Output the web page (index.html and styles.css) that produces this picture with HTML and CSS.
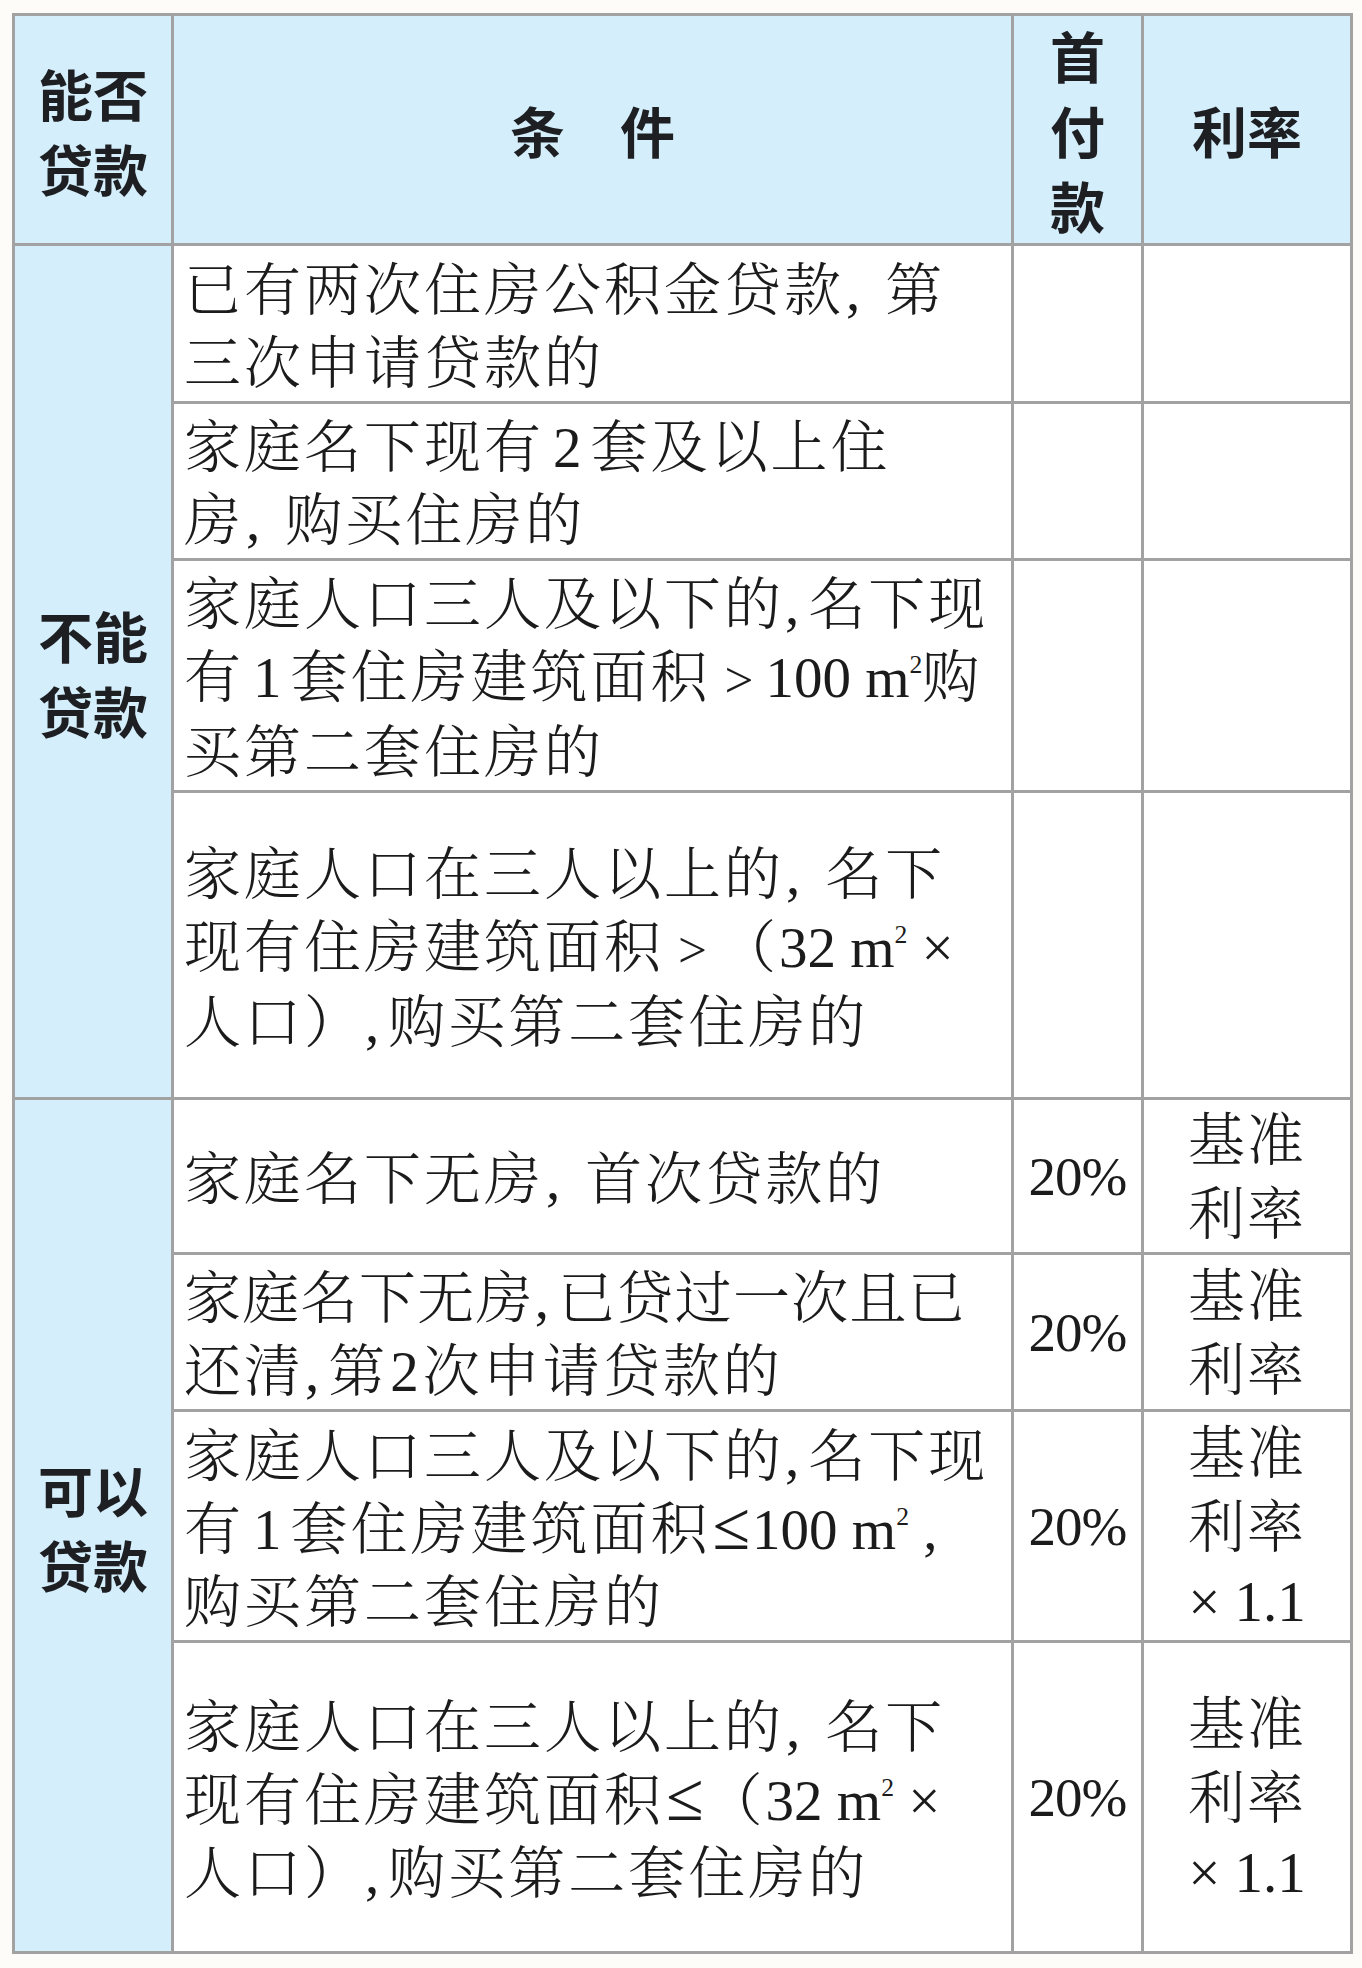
FILE: index.html
```html
<!DOCTYPE html>
<html lang="zh-CN">
<head>
<meta charset="utf-8">
<title>住房公积金贷款条件</title>
<link rel="stylesheet" href="styles.css">
</head>
<body>
<table class="loan">
  <colgroup>
    <col class="c-label">
    <col class="c-cond">
    <col class="c-pay">
    <col class="c-rate">
  </colgroup>
  <thead>
    <tr class="r-head">
      <th class="head">能否<br>贷款</th>
      <th class="head">条　件</th>
      <th class="head">首<br>付<br>款</th>
      <th class="head">利率</th>
    </tr>
  </thead>
  <tbody>
    <tr class="r1">
      <th class="group" rowspan="4">不能<br>贷款</th>
      <td class="cond">已有两次住房公积金贷款<span class="lat cm">,</span>第<br>三次申请贷款的</td>
      <td class="val"></td>
      <td class="rate"></td>
    </tr>
    <tr class="r2">
      <td class="cond">家庭名下现有<span class="lat num">2</span>套及以上住<br>房<span class="lat cm">,</span>购买住房的</td>
      <td class="val"></td>
      <td class="rate"></td>
    </tr>
    <tr class="r3">
      <td class="cond">家庭人口三人及以下的<span class="lat cn">,</span>名下现<br>有<span class="lat num">1</span>套住房建筑面积<span class="lat op">&gt;</span><span class="lat">100 m<sup>2</sup></span>购<br>买第二套住房的</td>
      <td class="val"></td>
      <td class="rate"></td>
    </tr>
    <tr class="r4">
      <td class="cond">家庭人口在三人以上的<span class="lat cm">,</span>名下<br>现有住房建筑面积<span class="lat op">&gt;</span>（<span class="lat">32 m<sup>2</sup> ×</span><br>人口）<span class="lat cn">,</span>购买第二套住房的</td>
      <td class="val"></td>
      <td class="rate"></td>
    </tr>
    <tr class="r5">
      <th class="group" rowspan="4">可以<br>贷款</th>
      <td class="cond">家庭名下无房<span class="lat cm">,</span>首次贷款的</td>
      <td class="val">20%</td>
      <td class="rate">基准<br>利率</td>
    </tr>
    <tr class="r6">
      <td class="cond"><span class="tight">家庭名下无房<span class="lat cn">,</span>已贷过一次且已</span><br>还清<span class="lat cn">,</span>第<span class="lat num-t">2</span>次申请贷款的</td>
      <td class="val">20%</td>
      <td class="rate">基准<br>利率</td>
    </tr>
    <tr class="r7">
      <td class="cond">家庭人口三人及以下的<span class="lat cn">,</span>名下现<br>有<span class="lat num">1</span>套住房建筑面积<span class="lat le">≤</span><span class="lat">100 m<sup>2</sup> ,</span><br>购买第二套住房的</td>
      <td class="val">20%</td>
      <td class="rate">基准<br>利率<br><span class="lat">× 1.1</span></td>
    </tr>
    <tr class="r8">
      <td class="cond">家庭人口在三人以上的<span class="lat cm">,</span>名下<br>现有住房建筑面积<span class="lat le">≤</span>（<span class="lat">32 m<sup>2</sup> ×</span><br>人口）<span class="lat cn">,</span>购买第二套住房的</td>
      <td class="val">20%</td>
      <td class="rate">基准<br>利率<br><span class="lat">× 1.1</span></td>
    </tr>
  </tbody>
</table>
</body>
</html>
```

FILE: styles.css
```css
html, body {
  margin: 0;
  padding: 0;
  background: #fdfcf8;
}

body {
  padding: 13px 0 0 12px;
  color: #1b1b1b;
  font-family: "Liberation Serif", "Noto Serif CJK SC", "Noto Sans CJK SC", serif;
}

.loan {
  border-collapse: collapse;
  table-layout: fixed;
  width: 1338px;
  border: 3px solid #a2a2a2;
}

.c-label { width: 159px; }
.c-cond  { width: 840px; }
.c-pay   { width: 130px; }
.c-rate  { width: 209px; }

.loan th,
.loan td {
  border: 3px solid #a2a2a2;
  padding: 0;
  vertical-align: middle;
}

.r-head { height: 230px; }
.r1 { height: 158px; }
.r2 { height: 157px; }
.r3 { height: 232px; }
.r4 { height: 307px; }
.r5 { height: 155px; }
.r6 { height: 157px; }
.r7 { height: 231px; }
.r8 { height: 311px; }

.loan .head,
.loan .group {
  background: #d4eefb;
  font-family: "Noto Sans CJK SC", "Noto Sans", sans-serif;
  font-weight: 700;
  font-size: 55px;
  line-height: 75px;
  color: #1d1f22;
  text-align: center;
}

.loan .cond,
.loan .val,
.loan .rate {
  background: #ffffff;
}

.loan .cond {
  padding: 6px 0 0 10px;
  font-weight: 300;
  font-size: 57px;
  letter-spacing: 3px;
  line-height: 73px;
  white-space: nowrap;
  text-align: left;
}

.tight {
  letter-spacing: 1.3px;
}

.loan .val {
  text-align: center;
  font-family: "Liberation Serif", serif;
  font-size: 55px;
  letter-spacing: -1px;
}

.loan .rate {
  padding-top: 3px;
  text-align: center;
  font-weight: 300;
  font-size: 57px;
  letter-spacing: 2px;
  line-height: 74px;
  white-space: nowrap;
}

.lat {
  font-family: "Liberation Serif", serif;
  font-weight: 400;
  letter-spacing: 0;
}

.lat sup {
  font-size: 0.45em;
  vertical-align: 0.95em;
  line-height: 0;
}

.cm {
  margin: 0 25px 0 2px;
}

.cn {
  margin: 0 9px 0 1px;
}

.num {
  margin: 0 9px;
}

.num-t {
  margin: 0 4px 0 2px;
}

.op {
  display: inline-block;
  font-size: 0.9em;
  margin: 0 12px 0 14px;
}

.le {
  display: inline-block;
  font-size: 1.2em;
  line-height: 0;
  margin: 0 2px 0 2px;
}
```
